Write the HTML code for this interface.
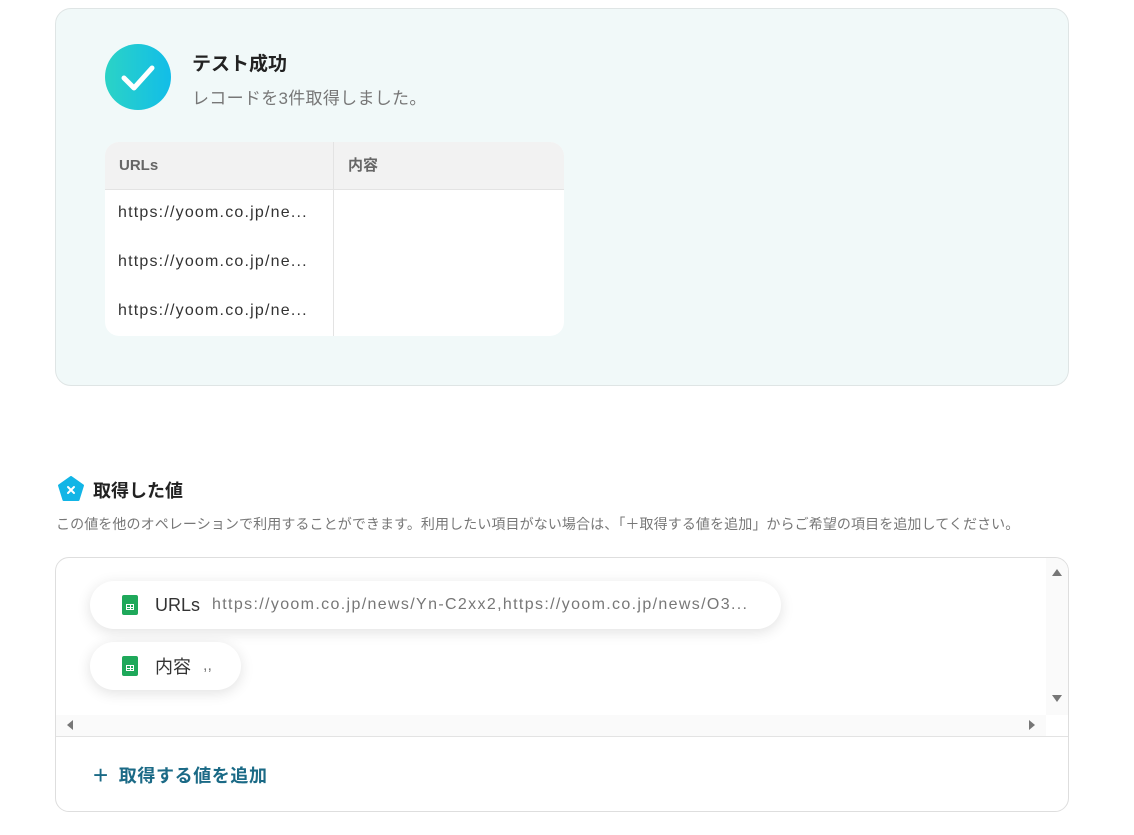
<!DOCTYPE html>
<html><head><meta charset="utf-8"><style>
*{box-sizing:border-box;margin:0;padding:0}
body{width:1134px;height:835px;background:#fff;font-family:"Liberation Sans","Noto Sans CJK JP",sans-serif;position:relative;overflow:hidden;color:#222}
.abs{position:absolute}
.card{left:55px;top:8px;width:1014px;height:378px;background:#f1f9f9;border:1px solid #dfe5e5;border-radius:16px}
.check{left:105px;top:44px;width:66px;height:66px;border-radius:50%;background:linear-gradient(90deg,#2bd3c6,#12bde8)}
.tbl{left:105px;top:142px;width:459px;height:194px;background:#fff;border-radius:14px;overflow:hidden}
.th{top:0;height:48px;background:#f2f2f2;border-bottom:1px solid #e3e3e3;width:100%}
.cell{font-size:16px;color:#333;letter-spacing:1.2px}
.box{left:55px;top:557px;width:1014px;height:255px;border:1px solid #dedede;border-radius:14px;overflow:hidden}
.pill{background:#fff;border-radius:24px;box-shadow:0 3px 14px rgba(0,0,0,.12);height:48px;display:flex;align-items:center;padding-left:32px}
.sheet{width:16px;height:20px;background:#1ea85a;border-radius:2px;position:relative;margin-right:17px;flex:none}
.sheet:after{content:"";position:absolute;left:4px;top:9px;width:8px;height:6px;border:1px solid #fff;background:linear-gradient(#fff,#fff) 3px 0/1px 100% no-repeat,linear-gradient(#fff,#fff) 0 2px/100% 1px no-repeat;box-sizing:border-box}
</style></head><body>
<div class="abs card"></div>
<div class="abs check"><svg width="66" height="66"><path d="M19 34 L29 44 L47 24" stroke="#fff" stroke-width="5" fill="none" stroke-linecap="round" stroke-linejoin="round"/></svg></div>
<div class="abs" style="left:192px;top:49px;font-size:19px;font-weight:bold;color:#222">テスト成功</div>
<div class="abs" style="left:192px;top:84px;font-size:17px;color:#777;letter-spacing:.3px">レコードを3件取得しました。</div>
<div class="abs tbl">
 <div class="abs th"></div>
 <div class="abs" style="left:228px;top:0;width:1px;height:194px;background:#e3e3e3"></div>
 <div class="abs" style="left:14px;top:15px;font-size:15px;line-height:18px;font-weight:bold;color:#666">URLs</div>
 <div class="abs" style="left:243px;top:15px;font-size:15px;line-height:18px;font-weight:bold;color:#666">内容</div>
 <div class="abs cell" style="left:13px;top:62px">https://yoom.co.jp/ne...</div>
 <div class="abs cell" style="left:13px;top:111px">https://yoom.co.jp/ne...</div>
 <div class="abs cell" style="left:13px;top:160px">https://yoom.co.jp/ne...</div>
</div>
<svg class="abs" style="left:57px;top:475px" width="28" height="28" viewBox="0 0 28 28"><path d="M14 2 L26 10.5 L21.5 25 L6.5 25 L2 10.5 Z" fill="#12b5e6" stroke="#12b5e6" stroke-width="2" stroke-linejoin="round"/><path d="M11 12 L17 18 M17 12 L11 18" stroke="#fff" stroke-width="2" stroke-linecap="round"/></svg>
<div class="abs" style="left:93px;top:477px;font-size:18px;font-weight:bold;color:#222">取得した値</div>
<div class="abs" style="left:56px;top:514px;font-size:14px;color:#777;white-space:nowrap;letter-spacing:.1px">この値を他のオペレーションで利用することができます。利用したい項目がない場合は、「＋取得する値を追加」からご希望の項目を追加してください。</div>
<div class="abs box">
 <div class="abs" style="left:990px;top:0;width:23px;height:157px;background:#fafafa"></div>
 <div class="abs" style="left:0;top:157px;width:990px;height:22px;background:#fafafa"></div>
 <div class="abs" style="left:0;top:178px;width:1014px;height:1px;background:#e3e3e3"></div>
 <svg class="abs" style="left:994px;top:8px" width="14" height="12"><path d="M2 10 L7 3 L12 10Z" fill="#777"/></svg>
 <svg class="abs" style="left:994px;top:134px" width="14" height="12"><path d="M2 3 L7 10 L12 3Z" fill="#777"/></svg>
 <svg class="abs" style="left:8px;top:160px" width="12" height="14"><path d="M9 2 L3 7 L9 12Z" fill="#777"/></svg>
 <svg class="abs" style="left:970px;top:160px" width="12" height="14"><path d="M3 2 L9 7 L3 12Z" fill="#777"/></svg>
 <div class="abs pill" style="left:34px;top:23px;width:691px"><div class="sheet"></div><span style="font-size:18px;color:#333;margin-right:12px">URLs</span><span style="font-size:16px;color:#777;letter-spacing:1.35px;white-space:nowrap">https://yoom.co.jp/news/Yn-C2xx2,https://yoom.co.jp/news/O3...</span></div>
 <div class="abs pill" style="left:34px;top:84px;width:151px"><div class="sheet"></div><span style="font-size:18px;color:#333;margin-right:12px">内容</span><span style="font-size:16px;color:#777">,,</span></div>
 <div class="abs" style="left:37px;top:202px;font-size:18px;font-weight:bold;color:#1b6a86;white-space:nowrap;letter-spacing:.6px"><span style="font-size:26px;font-weight:normal;vertical-align:-2px;margin-right:10px">+</span>取得する値を追加</div>
</div>
</body></html>
